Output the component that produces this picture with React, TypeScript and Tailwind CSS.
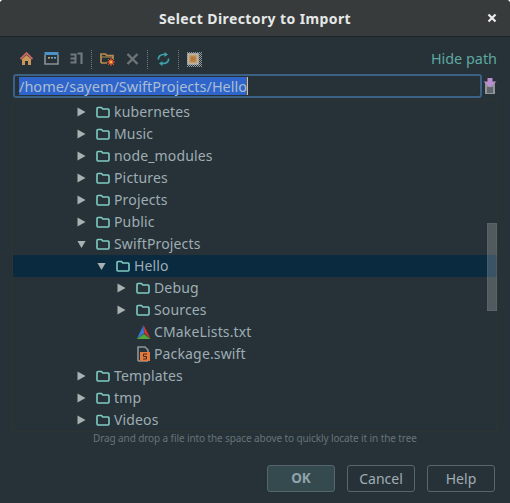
import React from "react";

const Folder = () => (
  <svg width="14" height="12" viewBox="0 0 14 12" className="shrink-0">
    <path d="M1 10V2.5C1 2 1.4 1.5 2 1.5H5.5L6.8 3H12C12.6 3 13 3.4 13 4V10C13 10.6 12.6 11 12 11H2C1.4 11 1 10.6 1 10Z" fill="none" stroke="#80cbc4" strokeWidth="1.6" />
  </svg>
);

const Arrow = ({ state }: { state: "open" | "closed" | "none" }) => (
  <span className="w-[9px] h-[10px] shrink-0 flex items-center justify-center">
    {state === "closed" && (
      <svg width="9" height="10" viewBox="0 0 9 10"><path d="M0.5 0.5L8.5 5L0.5 9.5Z" fill="#a9b1b3" /></svg>
    )}
    {state === "open" && (
      <svg width="10" height="9" viewBox="0 0 10 9"><path d="M0.5 0.5H9.5L5 8.5Z" fill="#a9b1b3" /></svg>
    )}
  </span>
);

const CMake = () => (
  <svg width="15" height="14" viewBox="0 0 15 14" className="shrink-0">
    <path d="M7.5 0L8 8.5L1 13.5Z" fill="#3a78d0" />
    <path d="M7.5 0L14.5 13.5L8.5 8.5Z" fill="#d8352f" />
    <path d="M0.5 14L8 9L14.5 14Z" fill="#4da83f" />
  </svg>
);

const Swift = () => (
  <svg width="13" height="16" viewBox="0 0 13 16" className="shrink-0">
    <path d="M1 15V1H8L11 4V6" fill="none" stroke="#8f9598" strokeWidth="1.6" />
    <path d="M1 15H11" stroke="#8f9598" strokeWidth="1.6" />
    <rect x="3" y="6" width="10" height="9" fill="#e57a3c" />
    <path d="M10 8H6.5V10.5H9.5V13H6" fill="none" stroke="#3a2a20" strokeWidth="1" />
  </svg>
);

type Row = { name: string; level: number; arrow: "open" | "closed" | "none"; icon?: "folder" | "cmake" | "swift"; selected?: boolean };

const rows: Row[] = [
  { name: "kubernetes", level: 0, arrow: "closed" },
  { name: "Music", level: 0, arrow: "closed" },
  { name: "node_modules", level: 0, arrow: "closed" },
  { name: "Pictures", level: 0, arrow: "closed" },
  { name: "Projects", level: 0, arrow: "closed" },
  { name: "Public", level: 0, arrow: "closed" },
  { name: "SwiftProjects", level: 0, arrow: "open" },
  { name: "Hello", level: 1, arrow: "open", selected: true },
  { name: "Debug", level: 2, arrow: "closed" },
  { name: "Sources", level: 2, arrow: "closed" },
  { name: "CMakeLists.txt", level: 2, arrow: "none", icon: "cmake" },
  { name: "Package.swift", level: 2, arrow: "none", icon: "swift" },
  { name: "Templates", level: 0, arrow: "closed" },
  { name: "tmp", level: 0, arrow: "closed" },
  { name: "Videos", level: 0, arrow: "closed" },
];

const levelPad: Record<number, string> = { 0: "pl-[64px]", 1: "pl-[84px]", 2: "pl-[104px]" };

const Sep = () => <span className="w-px h-[19px] border-l border-dotted border-[#6f7b80] mx-[8px]" />;

export default function App() {
  return (
    <div className="w-[510px] h-[503px] bg-[#263238] flex flex-col overflow-hidden rounded-t-[4px] text-[14px] text-[#9fadb3]" style={{ fontFamily: '"Noto Sans", sans-serif' }}>
      <div className="h-[37px] shrink-0 bg-[#373b3b] border-b border-[#1f2426] flex items-center relative">
        <div className="flex-1 text-center text-[14px] font-bold tracking-[0.4px] text-[#e6e8e8]">Select Directory to Import</div>
        <svg width="10" height="10" viewBox="0 0 10 10" className="absolute right-[13px] top-[13px]">
          <path d="M1.5 1.5L8.5 8.5M8.5 1.5L1.5 8.5" stroke="#eceeee" strokeWidth="2.2" />
        </svg>
      </div>

      <div className="h-[38px] shrink-0 flex items-center pl-[20px] pr-[13px] pt-[6px] justify-between">
        <div className="flex items-center">
          <span className="w-[13px] h-[14px] flex mr-[11px]">
            <svg width="13" height="14" viewBox="0 0 13 14">
              <path d="M2 7V13H5V9H8V13H11V7L6.5 3Z" fill="#c9975a" />
              <path d="M0.5 7L6.5 1L12.5 7" fill="none" stroke="#c9665f" strokeWidth="1.8" />
            </svg>
          </span>
          <span className="w-[15px] h-[14px] flex mr-[11px]">
            <svg width="15" height="13" viewBox="0 0 15 13">
              <rect x="0.5" y="0" width="14" height="3" fill="#4a93c8" />
              <path d="M1 3V12H14V3" fill="none" stroke="#8a9195" strokeWidth="1.6" />
              <rect x="4" y="5" width="2" height="1.6" fill="#d8a64f" />
              <rect x="7" y="5" width="2" height="1.6" fill="#6fa5c9" />
              <rect x="10" y="5" width="2" height="1.6" fill="#6fa5c9" />
            </svg>
          </span>
          <span className="w-[13px] h-[14px] flex">
            <svg width="13" height="13" viewBox="0 0 13 13">
              <path d="M0.5 2.5H5.5V10.5H0.5M0.5 6.5H5" fill="none" stroke="#71787b" strokeWidth="2" />
              <path d="M7.5 1.5H11.5V12" fill="none" stroke="#71787b" strokeWidth="2.2" />
            </svg>
          </span>
          <Sep />
          <span className="w-[15px] h-[14px] flex mr-[11px]">
            <svg width="15" height="14" viewBox="0 0 15 14">
              <path d="M1 11V2H5.5L6.8 3.5H13V7M1 11H7" fill="none" stroke="#b98c4e" strokeWidth="1.7" />
              <path d="M1 5H13" stroke="#b98c4e" strokeWidth="1" />
              <circle cx="11" cy="10" r="2.6" fill="#e2402f" />
              <path d="M11 5.8V14M6.8 10H15M8 7L14 13M14 7L8 13" stroke="#e8662f" strokeWidth="0.8" />
              <circle cx="11" cy="10" r="1.2" fill="#f0c040" />
            </svg>
          </span>
          <span className="w-[13px] h-[14px] flex items-center">
            <svg width="13" height="12" viewBox="0 0 13 12">
              <path d="M1.5 1L11.5 11M11.5 1L1.5 11" stroke="#6e7477" strokeWidth="2.4" />
            </svg>
          </span>
          <Sep />
          <span className="w-[13px] h-[14px] flex items-center ml-[1px]">
            <svg width="13" height="14" viewBox="0 0 13 14">
              <path d="M1.5 7.5C1 4.5 3.5 2.5 6.5 2.5H8M11.5 6.5C12 9.5 9.5 11.5 6.5 11.5H5" fill="none" stroke="#3fa2ac" strokeWidth="1.7" />
              <path d="M7.5 0L11 2.5L7.5 5ZM5.5 9L2 11.5L5.5 14Z" fill="#3fa2ac" />
            </svg>
          </span>
          <Sep />
          <span className="w-[15px] h-[15px] flex">
            <svg width="15" height="15" viewBox="0 0 15 15">
              <defs>
                <pattern id="chk" width="2" height="2" patternUnits="userSpaceOnUse">
                  <rect width="1" height="1" fill="#9a9a9a" />
                  <rect x="1" y="1" width="1" height="1" fill="#9a9a9a" />
                </pattern>
              </defs>
              <rect width="15" height="15" fill="url(#chk)" />
              <rect x="1" y="2" width="10" height="10" fill="#c69a62" stroke="#b6bcbe" strokeWidth="1.4" />
              <rect x="3.5" y="4.5" width="5" height="5" fill="#b5793d" />
            </svg>
          </span>
        </div>
        <span className="text-[#5fa8a0] text-[14.4px] leading-[19px] mt-[-2px]">Hide path</span>
      </div>

      <div className="h-[24px] shrink-0 flex items-center pl-[13px] pr-[8px] mt-[-1px]">
        <div className="w-[469px] h-[24px] border-2 border-[#3d6185] rounded-[3px] flex items-center pl-[4px] bg-[#263238]">
          <span className="bg-[#2f65ca] text-[#a9bdd2] h-[18px] leading-[18px] text-[14.5px] border-r border-[#e8c060] whitespace-nowrap">/home/sayem/SwiftProjects/Hello</span>
        </div>
        <span className="ml-[1px] flex">
          <svg width="14" height="17" viewBox="0 0 14 17">
            <path d="M2 4H12V16H2Z" fill="#8f9598" />
            <path d="M4 10H10M4 12H10M4 14H10" stroke="#2f383c" strokeWidth="1" />
            <path d="M4.5 0H9.5V3.5H13.5L7 9.5L0.5 3.5H4.5Z" fill="#bb8ed0" />
          </svg>
        </span>
      </div>

      <div className="ml-[12px] mr-[12px] mt-[2px] h-[332px] shrink-0 border border-[#2d3432] relative">
        <div>
          {rows.map((r) => (
            <div key={r.name} className={`h-[22px] flex items-center ${levelPad[r.level]} ${r.selected ? "bg-[#0a2a3f]" : ""}`}>
              <Arrow state={r.arrow} />
              <span className="ml-[10px] w-[14px] flex justify-center shrink-0">
                {r.icon === "cmake" ? <CMake /> : r.icon === "swift" ? <Swift /> : <Folder />}
              </span>
              <span className="ml-[4px] leading-[22px] tracking-[0.15px] whitespace-nowrap">{r.name}</span>
            </div>
          ))}
        </div>
        <div className="absolute right-0 top-[122px] w-[10px] h-[88px] bg-white/20 border border-white/5" />
      </div>

      <div className="pl-[93px] text-[10px] tracking-[-0.1px] leading-[13px] text-[#667377] whitespace-nowrap">Drag and drop a file into the space above to quickly locate it in the tree</div>

      <div className="flex justify-end gap-[12px] pr-[15px] mt-[20px]">
        <button className="w-[68px] h-[27px] rounded-[3px] border border-[#56666b] bg-[#344a4f] font-bold text-[#92a3a9] text-[13.5px]">OK</button>
        <button className="w-[68px] h-[27px] rounded-[3px] border border-[#56666b] text-[#a0adb2] text-[14px]">Cancel</button>
        <button className="w-[68px] h-[27px] rounded-[3px] border border-[#56666b] text-[#a0adb2] text-[14px]">Help</button>
      </div>
    </div>
  );
}
